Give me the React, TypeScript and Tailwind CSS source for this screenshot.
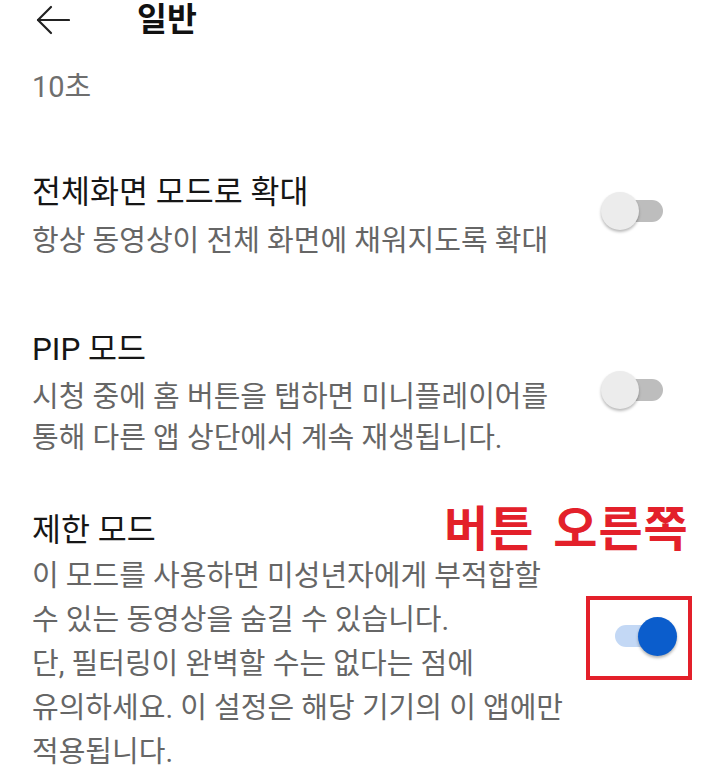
import React from 'react';

type ToggleProps = { on?: boolean };

// Android-style switch: thumb overhangs the track
const Toggle = ({ on = false }: ToggleProps) => {
    return (
        <div className="relative w-[62px] h-[38px]">
            <div
                className={
                    on
                        ? "absolute left-0 right-[9px] top-[8px] h-[22px] rounded-full bg-[#c3d8f5]"
                        : "absolute left-[9px] right-0 top-[8px] h-[22px] rounded-full bg-[#bdbdbd]"
                }
            />
            <div
                className={
                    on
                        ? "absolute right-0 top-0 w-[39px] h-[39px] rounded-full bg-[#0b5dcc] shadow-[0_2px_3px_rgba(0,0,0,0.3)]"
                        : "absolute left-0 top-0 w-[38px] h-[38px] rounded-full bg-[#ececec] shadow-[0_2px_3px_rgba(0,0,0,0.28)]"
                }
            />
        </div>
    );
};

const BackArrow = () => (
    <svg width="34" height="30" viewBox="0 0 34 30" fill="none" stroke="#222" strokeWidth="2.2" strokeLinecap="round" strokeLinejoin="round">
        <path d="M2 15 H33" />
        <path d="M15 2 L2 15 L15 28" />
    </svg>
);

const App = () => {
    return (
        <div className="w-[720px] h-[770px] overflow-hidden bg-white font-['Roboto','Noto_Sans_CJK_KR',sans-serif]">
            {/* header */}
            <div className="flex items-center h-[40px] pl-[36px]">
                <BackArrow />
                <h1 className="ml-[67px] text-[32.5px] font-bold text-[#111] leading-none">일반</h1>
            </div>

            <div className="mt-[27px] pl-[32px] h-[40px] leading-[40px] text-[29px] text-[#6e6e6e]">10초</div>

            {/* 전체화면 */}
            <div className="mt-[66px] flex">
                <div className="flex-1 pl-[32px]">
                    <div className="text-[31.5px] leading-[40px] text-[#161616]">전체화면 모드로 확대</div>
                    <div className="mt-[8px] text-[29px] leading-[40px] text-[#666]">항상 동영상이 전체 화면에 채워지도록 확대</div>
                </div>
                <div className="mt-[19px] mr-[57px]">
                    <Toggle />
                </div>
            </div>

            {/* PIP */}
            <div className="mt-[69px] flex">
                <div className="flex-1 pl-[32px]">
                    <div className="text-[31.5px] leading-[40px] text-[#161616]">PIP 모드</div>
                    <div className="mt-[7px] text-[29px] leading-[41px] text-[#666]">
                        <div>시청 중에 홈 버튼을 탭하면 미니플레이어를</div>
                        <div>통해 다른 앱 상단에서 계속 재생됩니다.</div>
                    </div>
                </div>
                <div className="mt-[41px] mr-[57px]">
                    <Toggle />
                </div>
            </div>

            {/* 제한 모드 */}
            <div className="relative mt-[52px] flex">
                <div className="flex-1 pl-[32px]">
                    <div className="text-[31.5px] leading-[40px] text-[#161616]">제한 모드</div>
                    <div className="mt-[3px] text-[29px] leading-[44px] text-[#666]">
                        <div>이 모드를 사용하면 미성년자에게 부적합할</div>
                        <div>수 있는 동영상을 숨길 수 있습니다.</div>
                        <div>단, 필터링이 완벽할 수는 없다는 점에</div>
                        <div>유의하세요. 이 설정은 해당 기기의 이 앱에만</div>
                        <div>적용됩니다.</div>
                    </div>
                </div>
                <div className="mt-[106px] mr-[43px]">
                    <Toggle on />
                </div>

                <div className="absolute left-[444px] top-[-5px] text-[48px] leading-none font-bold text-[#e3202a] tracking-[1px] [word-spacing:6px]">
                    버튼 오른쪽
                </div>
                <div className="absolute left-[586px] top-[85px] w-[106px] h-[84px] border-[4px] border-[#e3202a]" />
            </div>
        </div>
    );
};

export default App;
